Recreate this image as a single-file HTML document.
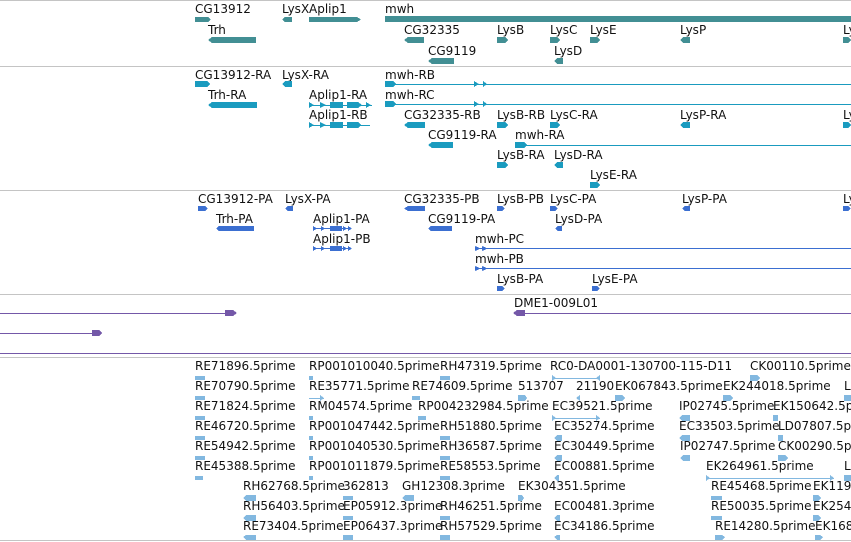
<!DOCTYPE html>
<html><head><meta charset="utf-8"><style>
html,body{margin:0;padding:0;background:#fff;width:851px;height:542px;overflow:hidden}
svg{display:block}
text{font-family:"DejaVu Sans","Liberation Sans",sans-serif;font-size:12px;fill:#111}
.g{fill:#428f94}.t{fill:#1a9bbf}.p{fill:#3b6fd1}.u{fill:#7458a8}.e{fill:#82b8e0}
</style></head><body>
<svg width="851" height="542" viewBox="0 0 851 542" shape-rendering="crispEdges">
<rect x="0" y="0" width="851" height="1" fill="#c4c4c4"/>
<rect x="0" y="66" width="851" height="1" fill="#c4c4c4"/>
<rect x="0" y="190" width="851" height="1" fill="#c4c4c4"/>
<rect x="0" y="294" width="851" height="1" fill="#c4c4c4"/>
<rect x="0" y="353" width="851" height="1" fill="#7458a8"/>
<rect x="0" y="357" width="851" height="1" fill="#c4c4c4"/>
<rect x="0" y="540" width="851" height="1" fill="#c4c4c4"/>

<text x="195" y="13">CG13912</text><text x="282" y="13">LysX</text><text x="309" y="13">Aplip1</text><text x="385" y="13">mwh</text>
<polygon class="g" points="195,17 208,17 211,19.5 208,22 195,22"/>
<polygon class="g" points="285,17 292,17 292,22 285,22 282,19.5"/>
<polygon class="g" points="309,17 357,17 361,19.5 357,22 309,22"/>
<rect class="g" x="385" y="16" width="466" height="6"/>
<text x="208" y="34">Trh</text><text x="404" y="34">CG32335</text><text x="497" y="34">LysB</text><text x="550" y="34">LysC</text><text x="590" y="34">LysE</text><text x="680" y="34">LysP</text><text x="843" y="34">Ly</text>
<polygon class="g" points="212,37 256,37 256,43 212,43 208,40"/>
<polygon class="g" points="408,37 424,37 424,43 408,43 404,40"/>
<polygon class="g" points="497,37 505,37 508,40 505,43 497,43"/>
<polygon class="g" points="550,37 557,37 560,40 557,43 550,43"/>
<polygon class="g" points="590,37 597,37 600,40 597,43 590,43"/>
<polygon class="g" points="683,37 690,37 690,43 683,43 680,40"/>
<polygon class="g" points="843,37 848,37 851,40 848,43 843,43"/>
<text x="428" y="55">CG9119</text><text x="554" y="55">LysD</text>
<polygon class="g" points="432,58 454,58 454,64 432,64 428,61"/>
<polygon class="g" points="557,58 563,58 563,64 557,64 554,61"/>

<text x="195" y="79">CG13912-RA</text><text x="282" y="79">LysX-RA</text><text x="385" y="79">mwh-RB</text>
<polygon class="t" points="195,81 207,81 210,84 207,87 195,87"/>
<polygon class="t" points="285,81 292,81 292,87 285,87 282,84"/>
<rect class="t" x="385" y="84" width="466" height="1"/>
<polygon class="t" points="385,81 393,81 396,84 393,87 385,87"/>
<polygon class="t" points="474,81 479,84 474,87"/><polygon class="t" points="483,81 487,84 483,87"/>
<text x="208" y="99">Trh-RA</text><text x="309" y="99">Aplip1-RA</text><text x="385" y="99">mwh-RC</text>
<polygon class="t" points="212,102 257,102 257,108 212,108 208,105"/>
<rect class="t" x="309" y="105" width="63" height="1"/>
<polygon class="t" points="309,102 314,105 309,108"/><polygon class="t" points="320,102 326,105 320,108"/>
<rect class="t" x="330" y="102" width="13" height="6"/><polygon class="t" points="347,102 358,102 362,105 358,108 347,108"/><polygon class="t" points="366,102 371,105 366,108"/>
<rect class="t" x="385" y="104" width="466" height="1"/>
<polygon class="t" points="385,101 393,101 396,104 393,107 385,107"/>
<polygon class="t" points="474,101 479,104 474,107"/><polygon class="t" points="483,101 487,104 483,107"/>
<text x="309" y="119">Aplip1-RB</text><text x="404" y="119">CG32335-RB</text><text x="497" y="119">LysB-RB</text><text x="550" y="119">LysC-RA</text><text x="680" y="119">LysP-RA</text><text x="843" y="119">Ly</text>
<rect class="t" x="309" y="125" width="61" height="1"/>
<polygon class="t" points="309,122 314,125 309,128"/><polygon class="t" points="320,122 326,125 320,128"/>
<rect class="t" x="330" y="122" width="13" height="6"/><polygon class="t" points="347,122 358,122 361,125 358,128 347,128"/>
<polygon class="t" points="408,122 425,122 425,128 408,128 404,125"/>
<polygon class="t" points="497,122 505,122 508,125 505,128 497,128"/>
<polygon class="t" points="550,122 557,122 560,125 557,128 550,128"/>
<polygon class="t" points="683,122 690,122 690,128 683,128 680,125"/>
<polygon class="t" points="843,122 848,122 851,125 848,128 843,128"/>
<text x="428" y="139">CG9119-RA</text><text x="515" y="139">mwh-RA</text>
<polygon class="t" points="432,142 453,142 453,148 432,148 428,145"/>
<rect class="t" x="515" y="145" width="336" height="1"/>
<polygon class="t" points="515,142 524,142 527,145 524,148 515,148"/>
<text x="497" y="159">LysB-RA</text><text x="554" y="159">LysD-RA</text>
<polygon class="t" points="497,162 505,162 508,165 505,168 497,168"/>
<polygon class="t" points="557,162 563,162 563,168 557,168 554,165"/>
<text x="590" y="179">LysE-RA</text>
<polygon class="t" points="590,182 597,182 600,185 597,188 590,188"/>

<text x="198" y="203">CG13912-PA</text><text x="285" y="203">LysX-PA</text><text x="404" y="203">CG32335-PB</text><text x="497" y="203">LysB-PB</text><text x="550" y="203">LysC-PA</text><text x="682" y="203">LysP-PA</text><text x="843" y="203">Ly</text>
<polygon class="p" points="198,206 205,206 208,208.5 205,211 198,211"/>
<polygon class="p" points="288,206 293,206 293,211 288,211 285,208.5"/>
<polygon class="p" points="408,206 425,206 425,211 408,211 404,208.5"/>
<polygon class="p" points="497,206 502,206 505,208.5 502,211 497,211"/>
<polygon class="p" points="550,206 555,206 558,208.5 555,211 550,211"/>
<polygon class="p" points="685,206 690,206 690,211 685,211 682,208.5"/>
<polygon class="p" points="843,206 848,206 851,208.5 848,211 843,211"/>
<text x="216" y="223">Trh-PA</text><text x="313" y="223">Aplip1-PA</text><text x="428" y="223">CG9119-PA</text><text x="555" y="223">LysD-PA</text>
<polygon class="p" points="219,226 254,226 254,231 219,231 216,228.5"/>
<rect class="p" x="313" y="228" width="36" height="1"/><rect class="p" x="330" y="226" width="12" height="5"/>
<polygon class="p" points="313,226 317,228.5 313,231"/><polygon class="p" points="321,226 325,228.5 321,231"/><polygon class="p" points="343,226 347,228.5 343,231"/><polygon class="p" points="348,226 352,228.5 348,231"/>
<polygon class="p" points="431,226 452,226 452,231 431,231 428,228.5"/>
<polygon class="p" points="558,226 562,226 562,231 558,231 555,228.5"/>
<text x="313" y="243">Aplip1-PB</text><text x="475" y="243">mwh-PC</text>
<rect class="p" x="313" y="248" width="36" height="1"/><rect class="p" x="330" y="246" width="12" height="5"/>
<polygon class="p" points="313,246 317,248.5 313,251"/><polygon class="p" points="321,246 325,248.5 321,251"/><polygon class="p" points="343,246 347,248.5 343,251"/><polygon class="p" points="348,246 352,248.5 348,251"/>
<rect class="p" x="475" y="248" width="376" height="1"/>
<polygon class="p" points="475,246 481,248.5 475,251"/><polygon class="p" points="482,246 488,248.5 482,251"/>
<text x="475" y="263">mwh-PB</text>
<rect class="p" x="475" y="268" width="376" height="1"/>
<polygon class="p" points="475,266 481,268.5 475,271"/><polygon class="p" points="482,266 488,268.5 482,271"/>
<text x="497" y="283">LysB-PA</text><text x="592" y="283">LysE-PA</text>
<polygon class="p" points="497,286 502,286 505,288.5 502,291 497,291"/>
<polygon class="p" points="592,286 597,286 600,288.5 597,291 592,291"/>

<text x="514" y="307">DME1-009L01</text>
<rect class="u" x="0" y="313" width="226" height="1"/>
<polygon class="u" points="225,310 233,310 237,313 233,316 225,316"/>
<rect class="u" x="516" y="313" width="335" height="1"/>
<polygon class="u" points="517,310 525,310 525,316 517,316 513,313"/>
<rect class="u" x="0" y="333" width="93" height="1"/>
<polygon class="u" points="92,330 99,330 102,333 99,336 92,336"/>

<g>
<text x="195" y="370">RE71896.5prime</text><text x="309" y="370">RP001010040.5prime</text><text x="440" y="370">RH47319.5prime</text><text x="550" y="370">RC0-DA0001-130700-115-D11</text><text x="750" y="370">CK00110.5prime</text>
<text x="195" y="390">RE70790.5prime</text><text x="309" y="390">RE35771.5prime</text><text x="412" y="390">RE74609.5prime</text><text x="518" y="390">513707</text><text x="576" y="390">21190</text><text x="615" y="390">EK067843.5prime</text><text x="723" y="390">EK244018.5prime</text><text x="844" y="390">L</text>
<text x="195" y="410">RE71824.5prime</text><text x="309" y="410">RM04574.5prime</text><text x="418" y="410">RP004232984.5prime</text><text x="552" y="410">EC39521.5prime</text><text x="679" y="410">IP02745.5prime</text><text x="773" y="410">EK150642.5prime</text>
<text x="195" y="430">RE46720.5prime</text><text x="309" y="430">RP001047442.5prime</text><text x="440" y="430">RH51880.5prime</text><text x="554" y="430">EC35274.5prime</text><text x="679" y="430">EC33503.5prime</text><text x="778" y="430">LD07807.5prime</text>
<text x="195" y="450">RE54942.5prime</text><text x="309" y="450">RP001040530.5prime</text><text x="440" y="450">RH36587.5prime</text><text x="554" y="450">EC30449.5prime</text><text x="680" y="450">IP02747.5prime</text><text x="778" y="450">CK00290.5prime</text>
<text x="195" y="470">RE45388.5prime</text><text x="309" y="470">RP001011879.5prime</text><text x="440" y="470">RE58553.5prime</text><text x="554" y="470">EC00881.5prime</text><text x="706" y="470">EK264961.5prime</text><text x="844" y="470">L</text>
<text x="243" y="490">RH62768.5prime</text><text x="343" y="490">362813</text><text x="402" y="490">GH12308.3prime</text><text x="518" y="490">EK304351.5prime</text><text x="711" y="490">RE45468.5prime</text><text x="813" y="490">EK119</text>
<text x="243" y="510">RH56403.5prime</text><text x="343" y="510">EP05912.3prime</text><text x="440" y="510">RH46251.5prime</text><text x="554" y="510">EC00481.3prime</text><text x="711" y="510">RE50035.5prime</text><text x="813" y="510">EK254</text>
<text x="243" y="530">RE73404.5prime</text><text x="343" y="530">EP06437.3prime</text><text x="440" y="530">RH57529.5prime</text><text x="554" y="530">EC34186.5prime</text><text x="715" y="530">RE14280.5prime</text><text x="815" y="530">EK168</text>
</g>
<g class="e">
<rect x="195" y="376" width="10" height="4"/><rect x="309" y="376" width="4" height="4"/><rect x="440" y="376" width="10" height="4"/>
<rect x="552" y="378" width="48" height="1"/><polygon points="552,375 556,378 552,381"/><polygon points="600,375 596,378 600,381"/>
<polygon points="750,375 757,375 760,378 757,381 750,381"/>
<rect x="195" y="396" width="10" height="4"/><rect x="309" y="398" width="15" height="1"/><polygon points="320,395 324,398 320,401"/><rect x="412" y="396" width="8" height="4"/>
<polygon points="518,395 525,395 527,398 525,401 518,401"/><polygon points="580,395 580,401 576,398"/><polygon points="615,395 622,395 625,398 622,401 615,401"/><polygon points="723,395 730,395 733,398 730,401 723,401"/><polygon points="844,395 851,395 851,401 844,401"/>
<rect x="195" y="416" width="10" height="4"/><rect x="309" y="416" width="4" height="4"/><rect x="418" y="416" width="8" height="4"/>
<rect x="552" y="418" width="48" height="1"/><polygon points="552,415 556,418 552,421"/><polygon points="596,415 600,418 596,421"/>
<polygon points="682,415 690,415 690,421 682,421 679,418"/><polygon points="773,415 778,415 778,421 773,421"/>
<rect x="195" y="436" width="10" height="4"/><rect x="309" y="436" width="4" height="4"/><rect x="440" y="436" width="10" height="4"/><polygon points="557,435 562,435 562,441 557,441 554,438"/><polygon points="682,435 690,435 690,441 682,441 679,438"/><polygon points="778,435 783,435 783,441 778,441"/>
<rect x="195" y="456" width="10" height="4"/><rect x="309" y="456" width="4" height="4"/><rect x="440" y="456" width="10" height="4"/><polygon points="557,455 562,455 562,461 557,461 554,458"/><polygon points="683,455 690,455 690,461 683,461 680,458"/><polygon points="778,455 785,455 788,458 785,461 778,461"/>
<rect x="195" y="476" width="8" height="4"/><rect x="309" y="476" width="4" height="4"/><rect x="440" y="476" width="10" height="4"/><polygon points="557,475 559,475 559,481 557,481 554,478"/>
<rect x="706" y="478" width="128" height="1"/><polygon points="706,475 710,478 706,481"/><polygon points="830,475 834,478 830,481"/><polygon points="844,475 851,475 851,481 844,481"/>
<polygon points="246,495 256,495 256,501 246,501 243,498"/><rect x="343" y="496" width="10" height="4"/><polygon points="405,495 414,495 414,501 405,501 402,498"/><polygon points="518,495 522,495 524,498 522,501 518,501"/><rect x="711" y="496" width="11" height="4"/><polygon points="813,495 818,495 821,498 818,501 813,501"/>
<polygon points="246,515 256,515 256,521 246,521 243,518"/><rect x="343" y="516" width="10" height="4"/><rect x="440" y="516" width="10" height="4"/><polygon points="557,515 560,515 560,521 557,521 554,518"/><rect x="711" y="516" width="11" height="4"/><polygon points="813,515 818,515 821,518 818,521 813,521"/>
<polygon points="246,535 256,535 256,540 246,540 243,537"/><rect x="343" y="535" width="10" height="5"/><rect x="440" y="535" width="10" height="5"/><polygon points="557,535 560,535 560,540 557,540 554,537"/><polygon points="715,535 722,535 725,537 722,540 715,540"/><polygon points="815,535 820,535 823,537 820,540 815,540"/>
</g>
</svg>
</body></html>
